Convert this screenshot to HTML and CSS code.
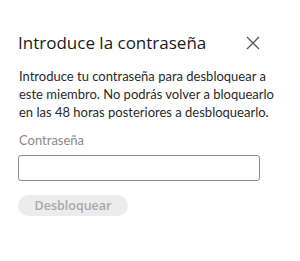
FILE: index.html
```html
<!DOCTYPE html>
<html lang="es">
<head>
  <meta charset="UTF-8" />
  <title>Introduce la contraseña</title>
  <link rel="stylesheet" href="styles.css">
</head>
<body>
  <div class="dialog">
    <div class="dialog-head">
      <h2 class="dialog-title">Introduce la contraseña</h2>
      <button class="close-btn" aria-label="Cerrar">
        <svg width="14" height="14" viewBox="0 0 14 14"><path d="M1 1L13 13M13 1L1 13" stroke="#555" stroke-width="1.3" fill="none"/></svg>
      </button>
    </div>
    <p class="dialog-text">Introduce tu contraseña para desbloquear a este miembro. No podrás volver a bloquearlo en las 48 horas posteriores a desbloquearlo.</p>
    <label class="field-label" for="pwd">Contraseña</label>
    <input class="field-input" type="password" id="pwd">
    <button class="unlock-btn" disabled>Desbloquear</button>
  </div>
</body>
</html>
```

FILE: styles.css
```css
body { margin: 0; background: #fff; font-family: 'Open Sans', sans-serif; color: #1f1f1f; }
.dialog { padding: 30px 40px 0 18px; }
.dialog-head { display: flex; align-items: center; justify-content: space-between; }
.dialog-title { margin: 0; font-size: 17px; font-weight: 400; line-height: 26px; color: #1a1a1a; }
.close-btn { border: 0; background: none; padding: 0; width: 14px; height: 14px; display: flex; }
.dialog-text { margin: 11px -20px 0 1px; font-family: Lato, sans-serif; font-size: 13px; line-height: 18px; color: #2a2a2a; }
.field-label { display: block; margin: 10px 0 0 1px; font-family: Lato, sans-serif; font-size: 13px; line-height: 18px; color: #8a8a8a; }
.field-input { display: block; box-sizing: border-box; width: 242px; height: 26px; margin-top: 6px; border: 1px solid #8c8c8c; border-radius: 3px; }
.unlock-btn { display: block; margin-top: 14px; width: 110px; height: 21px; border: 0; border-radius: 11px; background: #ececec; color: #a9a9a9; font-family: 'Open Sans', sans-serif; font-weight: 600; font-size: 12.5px; padding: 0; }
```
